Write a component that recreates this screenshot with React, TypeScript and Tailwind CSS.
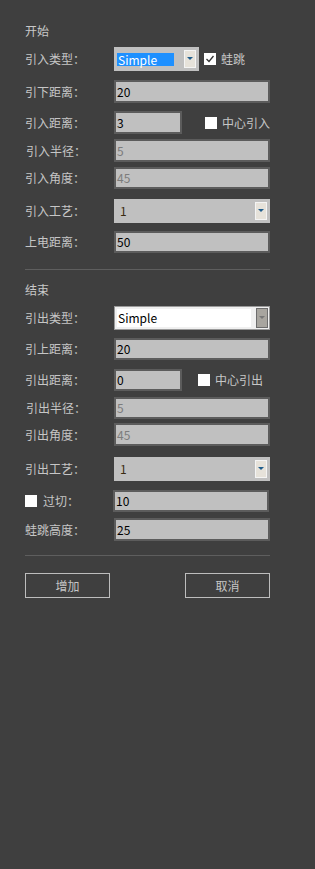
import React from 'react';

const font = { fontFamily: '"Microsoft YaHei", "Noto Sans CJK SC", "Noto Sans", sans-serif' };

// Light grey field with dark frame
const Field = ({ value, w = 'w-[156px]', h = 'h-[23px]', disabled = false }: { value: string; w?: string; h?: string; disabled?: boolean }) => (
  <div
    className={`${w} ${h} bg-[#c0c0c0] border-2 border-[#5c5c5c] flex items-center pl-[1px] text-[12px] ${disabled ? 'text-[#7c7c7c]' : 'text-black'}`}
  >
    {value}
  </div>
);

const Arrow = ({ color = '#1f5d8c' }: { color?: string }) => (
  <svg width="6" height="4" viewBox="0 0 6 4">
    <path d="M0 0 L6 0 L3 3 Z" fill={color} />
  </svg>
);

const Check = ({ checked = false }: { checked?: boolean }) => (
  <div className="w-[12px] h-[12px] bg-white flex items-center justify-center">
    {checked && (
      <svg width="10" height="10" viewBox="0 0 10 10">
        <path d="M1.5 5 L4 7.5 L8.5 2" fill="none" stroke="#333" strokeWidth="1.3" />
      </svg>
    )}
  </div>
);

const Label = ({ text, indent = false }: { text: string; indent?: boolean }) => (
  <div className={`w-[89px] text-[12px] text-[#c6c6c6] ${indent ? 'pl-[1px]' : ''}`}>{text}</div>
);

const Row = ({ mt, children }: { mt: string; children: React.ReactNode }) => (
  <div className={`flex items-center ${mt}`}>{children}</div>
);

const ProcessCombo = () => (
  <div className="w-[156px] h-[24px] bg-[#c0c0c0] flex items-center justify-between pl-[6px] pr-[3px] text-[12px] text-[#3a2a10]">
    <span>1</span>
    <div className="w-[12px] h-[18px] bg-[#e6e2da] border border-[#f4f4f4] flex items-center justify-center">
      <Arrow />
    </div>
  </div>
);

export default function App() {
  return (
    <div className="w-[315px] h-[869px] bg-[#3f3f3f] pl-[25px] pt-[23px]" style={font}>
      <div className="text-[12px] leading-[16px] text-[#c8c8c8]">开始</div>

      <Row mt="mt-[8px]">
        <Label text="引入类型：" />
        <div className="w-[85px] h-[24px] bg-[#c0c0c0] flex items-center pl-[3px] pr-[3px]">
          <div className="w-[57px] h-[13px] bg-[#1e90ff] text-white text-[12px] leading-[13px] pl-[1px]">Simple</div>
          <div className="ml-auto w-[12px] h-[18px] bg-[#e6e2da] border border-[#f4f4f4] flex items-center justify-center">
            <Arrow />
          </div>
        </div>
        <div className="ml-[5px]"><Check checked /></div>
        <span className="ml-[5px] text-[12px] text-[#c6c6c6]">蛙跳</span>
      </Row>

      <Row mt="mt-[9px]">
        <Label text="引下距离：" />
        <Field value="20" />
      </Row>

      <Row mt="mt-[8px]">
        <Label text="引入距离：" />
        <Field value="3" w="w-[68px]" />
        <div className="ml-[23px]"><Check /></div>
        <span className="ml-[5px] text-[12px] text-[#c6c6c6]">中心引入</span>
      </Row>

      <Row mt="mt-[5px]">
        <Label text="引入半径：" indent />
        <Field value="5" disabled />
      </Row>

      <Row mt="mt-[5px]">
        <Label text="引入角度：" />
        <Field value="45" h="h-[22px]" disabled />
      </Row>

      <Row mt="mt-[10px]">
        <Label text="引入工艺：" />
        <ProcessCombo />
      </Row>

      <Row mt="mt-[8px]">
        <Label text="上电距离：" />
        <Field value="50" h="h-[22px]" />
      </Row>

      <div className="mt-[16px] w-[245px] h-[1px] bg-[#5e5e5e]" />

      <div className="mt-[12px] text-[12px] leading-[16px] text-[#c8c8c8]">结束</div>

      <Row mt="mt-[8px]">
        <Label text="引出类型：" />
        <div className="w-[156px] h-[24px] bg-[#f0f0f0] border border-[#9a9a9a] flex items-center pl-[2px] pr-[1px]">
          <div className="flex-1 h-[18px] bg-white text-black text-[12px] leading-[18px] pl-[1px]">Simple</div>
          <div className="ml-[5px] w-[12px] h-[20px] bg-[#a8a59f] border border-[#6c6c6c] flex items-center justify-center">
            <Arrow color="#777" />
          </div>
        </div>
      </Row>

      <Row mt="mt-[8px]">
        <Label text="引上距离：" />
        <Field value="20" h="h-[22px]" />
      </Row>

      <Row mt="mt-[9px]">
        <Label text="引出距离：" />
        <Field value="0" w="w-[68px]" h="h-[22px]" />
        <div className="ml-[16px]"><Check /></div>
        <span className="ml-[5px] text-[12px] text-[#c6c6c6]">中心引出</span>
      </Row>

      <Row mt="mt-[6px]">
        <Label text="引出半径：" indent />
        <Field value="5" h="h-[22px]" disabled />
      </Row>

      <Row mt="mt-[4px]">
        <Label text="引出角度：" />
        <Field value="45" disabled />
      </Row>

      <Row mt="mt-[11px]">
        <Label text="引出工艺：" />
        <ProcessCombo />
      </Row>

      <Row mt="mt-[9px]">
        <div className="w-[88px] flex items-center">
          <Check />
          <span className="ml-[6px] text-[12px] text-[#c6c6c6]">过切：</span>
        </div>
        <Field value="10" h="h-[22px]" />
      </Row>

      <Row mt="mt-[6px]">
        <Label text="蛙跳高度：" />
        <Field value="25" />
      </Row>

      <div className="mt-[14px] w-[245px] h-[1px] bg-[#5e5e5e]" />

      <div className="mt-[17px] w-[245px] flex justify-between">
        <button className="w-[85px] h-[25px] border border-[#bdbdbd] text-[12px] text-[#c6c6c6]">增加</button>
        <button className="w-[85px] h-[25px] border border-[#bdbdbd] text-[12px] text-[#c6c6c6]">取消</button>
      </div>
    </div>
  );
}
